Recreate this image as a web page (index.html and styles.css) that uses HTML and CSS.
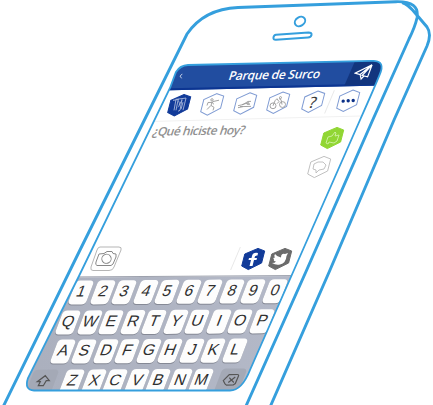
FILE: index.html
```
<!DOCTYPE html>
<html lang="es">
<head>
<meta charset="utf-8">
<title>Parque de Surco</title>
<link rel="stylesheet" href="styles.css">
</head>
<body>
<main class="phone">
  <svg class="defs" width="0" height="0" aria-hidden="true">
    <symbol id="hex" viewBox="-13 -12 26 24"><path d="M5-10.6 11.7-8 8.6 4-4.7 10.6-11.3 7-8.2-5Z"/></symbol>
  </svg>
  <section class="screen">
    <header class="bar">
      <svg class="back" viewBox="0 0 6 8"><path d="M4.500 1 1.500 4 3.500 7"/></svg>
      <h1 class="title">Parque de Surco</h1>
      <div class="send"><svg class="plane" viewBox="0 0 20 18"><path d="M18 2 1 10 6 11.500 18 2 8 12.500 13.500 14 18 2M6 11.500 7 16 10 13"/></svg></div>
    </header>
    <nav class="tools">
      <div class="sports">
        <svg class="icon solid" viewBox="-13 -12 26 24"><use href="#hex" x="-13" y="-12" width="26" height="24"/><path class="line pale" d="M-5 5-3-6 7-7 4 5M-6-5 0-6M-3 5-1-5M3-6 1 5-1 6M0 0 3-5M-1-5C1-2 1 0-1 2M4-3 2 4"/></svg>
        <svg class="icon outline" viewBox="-13 -12 26 24"><use href="#hex" x="-13" y="-12" width="26" height="24"/><path class="line" d="M-4-2 0-2 2-3 7-4M0-2-1 1-5 5M-1 1 2 3 1 6M-4-2-5 1M0-2 2 0"/><circle class="line" cx="0" cy="-4.500" r="1.200"/></svg>
        <svg class="icon outline" viewBox="-13 -12 26 24"><use href="#hex" x="-13" y="-12" width="26" height="24"/><path class="line" d="M-7 2-2 1 3-2 6-2M-5 3 6 3M-3 1 1 0 5 1M-7 4-2 3"/><circle class="line" cx="3" cy="0" r="1"/></svg>
        <svg class="icon outline" viewBox="-13 -12 26 24"><use href="#hex" x="-13" y="-12" width="26" height="24"/><ellipse class="line" cx="-5" cy="3" rx="3" ry="2.900"/><ellipse class="line" cx="4.500" cy="2" rx="3" ry="2.900"/><path class="line" d="M-5 3-3-2-1-4 1-1-1 1M1-4 3-3 4 2"/><circle class="line" cx="2.500" cy="-5" r="1"/></svg>
        <div class="ask"><svg class="icon outline" viewBox="-13 -12 26 24"><use href="#hex" x="-13" y="-12" width="26" height="24"/></svg><span class="mark">?</span></div>
      </div>
      <i class="rule"></i>
      <svg class="icon outline" viewBox="-13 -12 26 24"><use href="#hex" x="-13" y="-12" width="26" height="24"/><g class="dots"><circle cx="-4.800" cy="0.200" r="1.700"/><circle cx="0.200" cy="0" r="1.700"/><circle cx="5.200" cy="-0.200" r="1.700"/></g></svg>
    </nav>
    <div class="compose">
      <p class="prompt">¿Qué hiciste hoy?</p>
      <div class="votes">
        <svg class="icon like" viewBox="-13 -12 26 24"><use href="#hex" x="-13" y="-12" width="26" height="24"/><path class="line" d="M-6 5-4-1 0-2 3-6 4-5 3-2 7-3 5 3 2 5-3 4-4 6Z"/></svg>
        <svg class="icon dislike" viewBox="-13 -12 26 24"><use href="#hex" x="-13" y="-12" width="26" height="24"/><path class="line" d="M-5-3-1-5 4-5 7-2 5 2 0 3-3 6-3 3-6 2Z"/></svg>
      </div>
    </div>
    <div class="share">
      <svg class="camera" viewBox="0 0 34 28"><path class="frame" d="M11 2H30Q33 2 32 5L25 22Q24 25.500 20 25.500H4Q1 25.500 2 22L8 5Q9 2 11 2Z"/><path class="body" d="M10 9 15 8.500 18 6.500H23L24 8.500 27 9 27 12 24 19 22 20.500H8Q6 20 7 17Z"/><ellipse class="body" cx="17.500" cy="13.800" rx="4.700" ry="4.500" transform="rotate(-30 17.500 13.800)"/></svg>
      <i class="rule"></i>
      <svg class="icon solid" viewBox="-13 -12 26 24"><use href="#hex" x="-13" y="-12" width="26" height="24"/><path class="glyph" d="M5-6Q0-7-1-3L-1.500-1H-4L-4.500 1H-2L-3.500 7H-.5L1 1H3.500L4-1H1.500Q1.500-4 4.500-3.500Z"/></svg>
      <svg class="icon twitter" viewBox="-13 -12 26 24"><use href="#hex" x="-13" y="-12" width="26" height="24"/><path class="glyph" d="M-5-5Q-3-2 1-1.500 1-6 5-5L8-6 6.500-3Q6 4 0 5.500-4 6.500-8 4-5 4-4 2.500-7 2-6 0-8-1-5-1.500-6.500-3-5-5Z"/></svg>
    </div>
    <div class="keyboard">
      <div class="keys digits"><b>1</b><b>2</b><b>3</b><b>4</b><b>5</b><b>6</b><b>7</b><b>8</b><b>9</b><b>0</b></div>
      <div class="keys upper"><b>Q</b><b>W</b><b>E</b><b>R</b><b>T</b><b>Y</b><b>U</b><b>I</b><b>O</b><b>P</b></div>
      <div class="keys home"><b>A</b><b>S</b><b>D</b><b>F</b><b>G</b><b>H</b><b>J</b><b>K</b><b>L</b></div>
      <div class="keys lower">
        <span class="special"><svg viewBox="0 0 18 16"><path d="M11 3 15 8 12 8 9 13 4 13 6 9 3 9Z"/></svg></span>
        <b>Z</b><b>X</b><b>C</b><b>V</b><b>B</b><b>N</b><b>M</b>
        <span class="special erase"><svg viewBox="0 0 20 16"><path d="M2 9 8 3H16Q18 3 17 5L14 12 12 13.500H5Q4 13 3.500 12ZM8 6 12.500 11M14 5.500 7 11"/></svg></span>
      </div>
    </div>
  </section>
  <svg class="outline-art" viewBox="0 0 433 405">
    <path class="inner" d="M176 72Q180 65.500 188 65L372 60.800Q384 60.300 381 71 380 75 360 120L294 270 250 370Q242 390.500 230 390.500H34Q24 390 28 378L79 276 170 88Z"/>
    <path class="case" d="M3.500 406 80 250 187 34Q204 9 238 7.500L396 1.700Q420 1 417 18 415 27 409 39L372.700 120 306.700 270 246 406M402 2.500Q408 4 416 14L427 27Q432 34 427 46L394 120 330 270 270.500 406"/>
    <ellipse class="detail" cx="300" cy="21.500" rx="5.500" ry="4.300" transform="rotate(-32 300 21.500)"/>
    <path class="detail" d="M276 34.800 308.500 32.500Q312 32.500 311.500 35 311 37.300 308 37.500L276 39.800Q273 40 273.500 37.300 274 35 276 34.800Z"/>
  </svg>
</main>
</body>
</html>
```
FILE: styles.css
```
body { margin: 0; background: #fff; overflow: hidden; }
.phone { position: relative; width: 433px; height: 405px; }
.defs, .outline-art { position: absolute; inset: 0; }
.outline-art { width: 433px; height: 405px; fill: none; stroke: #359fdd; }
.inner { stroke-width: 1.8; }
.case { stroke-width: 2.9; }
.detail { stroke-width: 2; }

.screen {
  display: flex;
  flex-direction: column;
  box-sizing: border-box;
  height: 405px;
  padding-top: 58px;
  clip-path: path("M176 72Q180 65.500 188 65L372 60.800Q384 60.300 381 71 380 75 360 120L294 270 250 370Q242 390.500 230 390.500H34Q24 390 28 378L79 276 170 88Z");
}
.bar {
  display: flex;
  align-items: center;
  box-sizing: border-box;
  width: 228px;
  height: 30px;
  margin-left: 160px;
  padding-top: 7px;
  background: #214da0;
  border-bottom: 2px solid #0c3592;
  transform: skewY(-1.3deg);
}
.back { width: 6px; height: 8px; margin: -3px 0 0 18.500px; fill: none; stroke: #fff; }
.title {
  width: 90px;
  margin: -1px 0 0 46px;
  font: 600 12px/20px "Open Sans", sans-serif;
  letter-spacing: -.25px;
  color: #fff;
  white-space: nowrap;
  transform: skewX(-18deg);
}
.send { width: 50px; height: 30px; margin: -7px 0 0 32px; background: #12357e; transform: skewX(-24deg); }
.plane { display: block; width: 20px; height: 18px; margin: 8px 0 0 4px; fill: none; stroke: #fff; stroke-width: 1.2; transform: skewX(24deg); }

.tools {
  display: flex;
  align-items: center;
  height: 30px;
  margin-left: 150px;
  width: 214px;
  padding-left: 16px;
  border-bottom: 1px solid #f1f1f1;
  transform: skewY(-1.5deg);
}
.sports { display: flex; gap: 7px; }
.icon { display: block; flex: none; width: 26px; height: 24px; fill: none; }
.line { fill: none; stroke: #999; stroke-width: .9; }
.pale { stroke: #a9b7dc; }
.outline { stroke: #7f9bd3; }
.solid { fill: #123b99; stroke: #123b99; }
.ask { display: grid; place-items: center; margin-left: 2px; }
.ask > * { grid-area: 1 / 1; }
.mark { font: 400 15px/20px "Open Sans", sans-serif; color: #333; -webkit-text-stroke: .2px #333; transform: skewX(-18deg); }
.rule { flex: none; width: 1px; height: 23px; background: #e8e8e8; transform: skewX(-23deg); }
.tools .rule { margin: 0 5px 0 3px; }
.dots { fill: #0b3088; stroke: none; }

.compose { display: flex; justify-content: space-between; width: 192px; height: 124px; margin-left: 153px; }
.prompt {
  align-self: flex-start;
  margin: 2px 0 0;
  font: 600 12px/20px "Open Sans", sans-serif;
  letter-spacing: -.5px;
  color: #909090;
  white-space: nowrap;
  transform: skew(-18deg, -1deg);
}
.votes { display: flex; flex-direction: column; gap: 5px; padding-top: 7px; }
.like { fill: #91d634; stroke: #91d634; }
.like .line { stroke: #d1f3a5; }
.dislike { margin-left: -13px; stroke: #c0c0c0; }
.dislike .line { stroke: #bbb; }

.share { display: flex; align-items: center; height: 31px; margin-left: 89px; }
.camera { width: 34px; height: 28px; fill: none; }
.frame { stroke: #b5b5b5; }
.body { stroke: #888; }
.share .rule { margin: 0 4px 0 111.500px; }
.twitter { margin-left: 1.500px; fill: #6b6b6b; stroke: #6b6b6b; }
.glyph { fill: #fff; stroke: none; }

.keyboard {
  flex: none;
  box-sizing: border-box;
  width: 290px;
  height: 120px;
  margin: 2px 0 0 10px;
  padding-top: 3px;
  background: linear-gradient(90deg, #aaafbd, #b4b9c8);
  border-top: 1px solid #9da1ad;
  transform: skewY(-.35deg);
}
.keys { display: flex; gap: 3.5px; height: 23px; margin-bottom: 6.500px; }
.keys b, .special {
  width: 18px;
  height: 23.500px;
  flex: none;
  border-radius: 4px;
  transform: skewX(-21deg);
}
.keys b {
  background: #fdfdfd;
  box-shadow: 0 1px 0 #858995;
  color: #303030;
  font: 400 15.500px/22px "Liberation Sans", sans-serif;
  text-align: center;
}
.digits { padding-left: 62px; }
.upper { padding-left: 49px; }
.home { padding-left: 43.500px; }
.lower { padding-left: 20px; }
.special { width: 25px; margin-right: 4.500px; background: #a4a9b6; }
.special svg { display: block; width: 20px; height: 16px; margin: 3px 0 0 3px; fill: none; stroke: #555; stroke-width: 1.2; transform: skewX(21deg); }
.erase { margin-left: 4px; }
```
